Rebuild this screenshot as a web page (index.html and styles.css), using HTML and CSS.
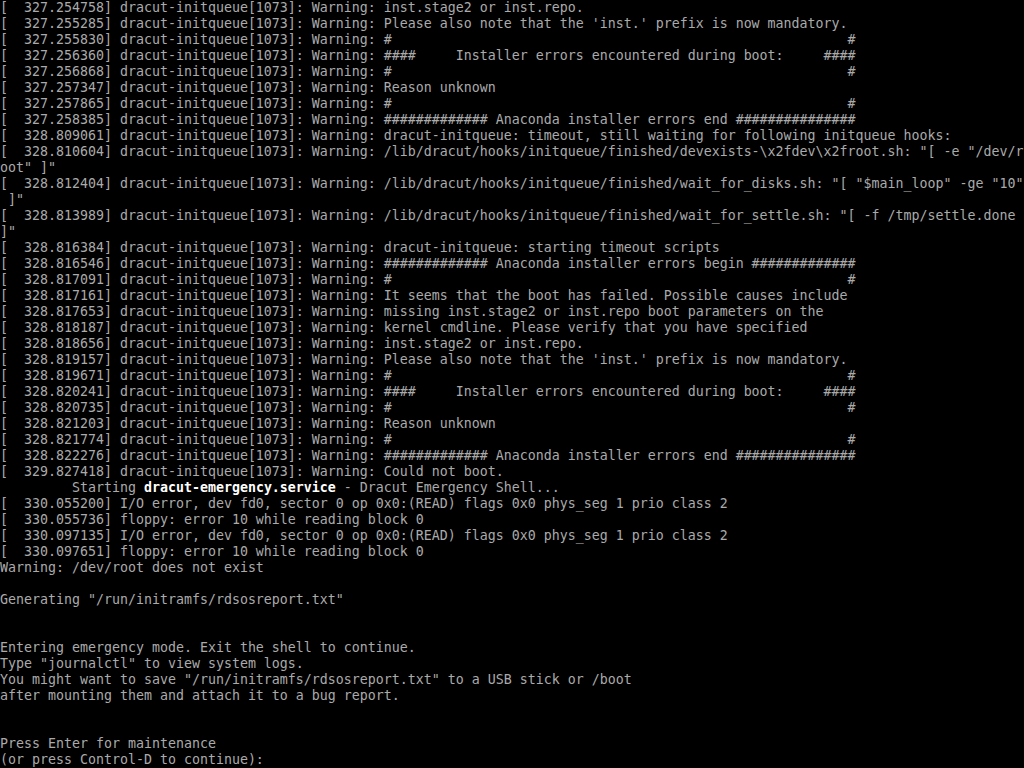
FILE: index.html
```html
<!DOCTYPE html>
<html lang="en">
<head>
<meta charset="utf-8">
<title>Emergency shell</title>
<link rel="stylesheet" href="styles.css">
</head>
<body>
<pre class="console">
[  327.254758] dracut-initqueue[1073]: Warning: inst.stage2 or inst.repo.
[  327.255285] dracut-initqueue[1073]: Warning: Please also note that the 'inst.' prefix is now mandatory.
[  327.255830] dracut-initqueue[1073]: Warning: #                                                         #
[  327.256360] dracut-initqueue[1073]: Warning: ####     Installer errors encountered during boot:     ####
[  327.256868] dracut-initqueue[1073]: Warning: #                                                         #
[  327.257347] dracut-initqueue[1073]: Warning: Reason unknown
[  327.257865] dracut-initqueue[1073]: Warning: #                                                         #
[  327.258385] dracut-initqueue[1073]: Warning: ############# Anaconda installer errors end ###############
[  328.809061] dracut-initqueue[1073]: Warning: dracut-initqueue: timeout, still waiting for following initqueue hooks:
[  328.810604] dracut-initqueue[1073]: Warning: /lib/dracut/hooks/initqueue/finished/devexists-\x2fdev\x2froot.sh: "[ -e "/dev/r
oot" ]"
[  328.812404] dracut-initqueue[1073]: Warning: /lib/dracut/hooks/initqueue/finished/wait_for_disks.sh: "[ "$main_loop" -ge "10"
 ]"
[  328.813989] dracut-initqueue[1073]: Warning: /lib/dracut/hooks/initqueue/finished/wait_for_settle.sh: "[ -f /tmp/settle.done 
]"
[  328.816384] dracut-initqueue[1073]: Warning: dracut-initqueue: starting timeout scripts
[  328.816546] dracut-initqueue[1073]: Warning: ############# Anaconda installer errors begin #############
[  328.817091] dracut-initqueue[1073]: Warning: #                                                         #
[  328.817161] dracut-initqueue[1073]: Warning: It seems that the boot has failed. Possible causes include
[  328.817653] dracut-initqueue[1073]: Warning: missing inst.stage2 or inst.repo boot parameters on the
[  328.818187] dracut-initqueue[1073]: Warning: kernel cmdline. Please verify that you have specified
[  328.818656] dracut-initqueue[1073]: Warning: inst.stage2 or inst.repo.
[  328.819157] dracut-initqueue[1073]: Warning: Please also note that the 'inst.' prefix is now mandatory.
[  328.819671] dracut-initqueue[1073]: Warning: #                                                         #
[  328.820241] dracut-initqueue[1073]: Warning: ####     Installer errors encountered during boot:     ####
[  328.820735] dracut-initqueue[1073]: Warning: #                                                         #
[  328.821203] dracut-initqueue[1073]: Warning: Reason unknown
[  328.821774] dracut-initqueue[1073]: Warning: #                                                         #
[  328.822276] dracut-initqueue[1073]: Warning: ############# Anaconda installer errors end ###############
[  329.827418] dracut-initqueue[1073]: Warning: Could not boot.
         Starting <span class="hl">dracut-emergency.service</span> - Dracut Emergency Shell...
[  330.055200] I/O error, dev fd0, sector 0 op 0x0:(READ) flags 0x0 phys_seg 1 prio class 2
[  330.055736] floppy: error 10 while reading block 0
[  330.097135] I/O error, dev fd0, sector 0 op 0x0:(READ) flags 0x0 phys_seg 1 prio class 2
[  330.097651] floppy: error 10 while reading block 0
Warning: /dev/root does not exist

Generating "/run/initramfs/rdsosreport.txt"


Entering emergency mode. Exit the shell to continue.
Type "journalctl" to view system logs.
You might want to save "/run/initramfs/rdsosreport.txt" to a USB stick or /boot
after mounting them and attach it to a bug report.


Press Enter for maintenance
(or press Control-D to continue):
</pre>
</body>
</html>
```

FILE: styles.css
```css
html, body {
  margin: 0;
  padding: 0;
  background: #000;
  width: 1024px;
  height: 768px;
  overflow: hidden;
}

.console {
  margin: 0;
  padding: 0;
  font-family: "DejaVu Sans Mono", "Liberation Mono", monospace;
  font-size: 13.29px;
  line-height: 16px;
  color: #aaaaaa;
  white-space: pre;
  -webkit-font-smoothing: none;
}

.hl {
  color: #ffffff;
  font-weight: bold;
}
```
